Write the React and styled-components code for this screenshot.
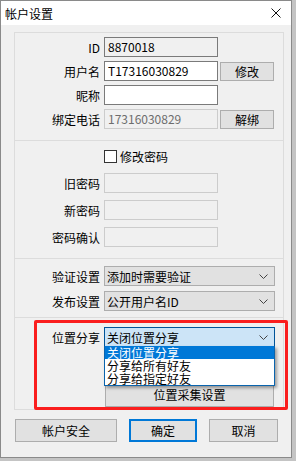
import React from "react";
import styled, { createGlobalStyle } from "styled-components";

const GlobalStyle = createGlobalStyle`
  body {
    margin: 0;
    background: #c4c4c4;
    font-family: "Noto Sans CJK SC", "Noto Sans", sans-serif;
    font-size: 12px;
    color: #000;
  }
`;

const Chevron = () => (
  <svg width="9" height="5" viewBox="0 0 9 5">
    <polyline points="0.5,0.5 4.5,4.5 8.5,0.5" fill="none" stroke="#444" strokeWidth="1" />
  </svg>
);

const CloseIcon = () => (
  <svg width="10" height="10" viewBox="0 0 10 10">
    <path d="M0.5 0.5 L9.5 9.5 M9.5 0.5 L0.5 9.5" stroke="#111" strokeWidth="1" />
  </svg>
);

const App = () => {
  return (
    <>
      <GlobalStyle />
      <Window>
        <TitleBar>
          <span>帐户设置</span>
          <Close><CloseIcon /></Close>
        </TitleBar>
        <Body>
          <Group>
            <Section pt={4} pb={11} gap={4}>
              <Row>
                <Label>ID</Label>
                <Field variant="readonly">8870018</Field>
              </Row>
              <Row>
                <Label>用户名</Label>
                <Field>T17316030829</Field>
                <SmallButton>修改</SmallButton>
              </Row>
              <Row>
                <Label>昵称</Label>
                <Field />
              </Row>
              <Row>
                <Label>绑定电话</Label>
                <Field variant="disabled">17316030829</Field>
                <SmallButton>解绑</SmallButton>
              </Row>
            </Section>

            <Section pt={5} pb={11} gap={7}>
              <Row>
                <span />
                <CheckLine>
                  <Box />
                  修改密码
                </CheckLine>
              </Row>
              <Row>
                <Label>旧密码</Label>
                <Field variant="disabled" />
              </Row>
              <Row>
                <Label>新密码</Label>
                <Field variant="disabled" />
              </Row>
              <Row>
                <Label>密码确认</Label>
                <Field variant="disabled" />
              </Row>
            </Section>

            <Section pt={7} pb={6} gap={5}>
              <Row>
                <Label>验证设置</Label>
                <Select>
                  添加时需要验证
                  <Chevron />
                </Select>
              </Row>
              <Row>
                <Label>发布设置</Label>
                <Select>
                  公开用户名ID
                  <Chevron />
                </Select>
              </Row>
            </Section>

            <Section pt={9} pb={7} gap={35} last>
              <Row>
                <Label>位置分享</Label>
                <Select focused>
                  关闭位置分享
                  <Chevron />
                </Select>
              </Row>
              <Row>
                <span />
                <WideButton>位置采集设置</WideButton>
              </Row>
              <DropList>
                <Option selected>关闭位置分享</Option>
                <Option>分享给所有好友</Option>
                <Option>分享给指定好友</Option>
              </DropList>
              <Highlight />
            </Section>
          </Group>

          <ButtonBar>
            <Button>帐户安全</Button>
            <Button primary>确定</Button>
            <Button>取消</Button>
          </ButtonBar>
        </Body>
      </Window>
    </>
  );
};

export default App;

const Window = styled.div`
  width: 292px;
  height: 458px;
  box-sizing: border-box;
  border: 1px solid #8a8a8a;
  background: #f0f0f0;
  display: flex;
  flex-direction: column;
`;

const TitleBar = styled.div`
  height: 24px;
  background: #fff;
  display: flex;
  align-items: center;
  justify-content: space-between;
  padding: 0 10px 0 4px;
  font-size: 12px;
`;

const Close = styled.div`
  display: flex;
  align-items: center;
`;

const Body = styled.div`
  padding: 7px 7px 0 13px;
`;

const Group = styled.div`
  border: 1px solid #dcdcdc;
`;

const Section = styled.div`
  position: relative;
  display: flex;
  flex-direction: column;
  gap: ${(p) => p.gap}px;
  padding-top: ${(p) => p.pt}px;
  padding-bottom: ${(p) => p.pb}px;
  border-bottom: ${(p) => (p.last ? "none" : "1px solid #dcdcdc")};
`;

const Row = styled.div`
  display: grid;
  grid-template-columns: 85px 114px 52px;
  column-gap: 4px;
  align-items: center;
  height: 20px;
  & > *:nth-child(3) {
    margin-left: -2px;
  }
`;

const Label = styled.div`
  text-align: right;
  white-space: nowrap;
`;

const Field = styled.div`
  height: 20px;
  box-sizing: border-box;
  padding: 0 3px;
  line-height: 18px;
  white-space: nowrap;
  overflow: hidden;
  background: ${(p) => (p.variant ? "#f0f0f0" : "#fff")};
  color: ${(p) => (p.variant === "disabled" ? "#6d6d6d" : "#000")};
  border: 1px solid
    ${(p) => (p.variant === "disabled" ? "#cccccc" : "#7a7a7a")};
`;

const SmallButton = styled.div`
  height: 19px;
  box-sizing: border-box;
  background: #e1e1e1;
  border: 1px solid #adadad;
  display: flex;
  align-items: center;
  justify-content: center;
`;

const CheckLine = styled.div`
  display: flex;
  align-items: center;
  gap: 3px;
  white-space: nowrap;
`;

const Box = styled.span`
  width: 13px;
  height: 13px;
  box-sizing: border-box;
  border: 1px solid #333;
  background: #fff;
`;

const Select = styled.div`
  grid-column: 2 / 4;
  width: 171px;
  height: 20px;
  box-sizing: border-box;
  padding: 0 6px 0 2px;
  display: flex;
  align-items: center;
  justify-content: space-between;
  background: ${(p) => (p.focused ? "#cce4f7" : "#e1e1e1")};
  border: 1px solid ${(p) => (p.focused ? "#005499" : "#adadad")};
`;

const WideButton = styled.div`
  grid-column: 2 / 4;
  width: 169px;
  height: 25px;
  margin-left: 1px;
  box-sizing: border-box;
  background: #e1e1e1;
  border: 1px solid #adadad;
  display: flex;
  align-items: center;
  justify-content: center;
`;

const DropList = styled.div`
  position: absolute;
  top: 28px;
  left: 89px;
  width: 171px;
  box-sizing: border-box;
  background: #fff;
  border: 1px solid #0a64ad;
  border-top: none;
  box-shadow: 2px 2px 3px rgba(0, 0, 0, 0.35);
  display: flex;
  flex-direction: column;
`;

const Option = styled.div`
  height: 13px;
  line-height: 13px;
  padding-left: 2px;
  font-size: 12px;
  white-space: nowrap;
  background: ${(p) => (p.selected ? "#0078d7" : "#fff")};
  color: ${(p) => (p.selected ? "#fff" : "#000")};
`;

const Highlight = styled.div`
  position: absolute;
  top: 2px;
  left: 19px;
  width: 254px;
  height: 90px;
  box-sizing: border-box;
  border: 3px solid #fa1e1e;
  border-radius: 2px;
  pointer-events: none;
`;

const ButtonBar = styled.div`
  display: grid;
  grid-template-columns: 102px 68px 69px;
  column-gap: 12px;
  padding-left: 1px;
  margin-top: 9px;
`;

const Button = styled.div`
  height: 23px;
  box-sizing: border-box;
  background: #e1e1e1;
  border: ${(p) => (p.primary ? "2px solid #0078d7" : "1px solid #adadad")};
  display: flex;
  align-items: center;
  justify-content: center;
`;
